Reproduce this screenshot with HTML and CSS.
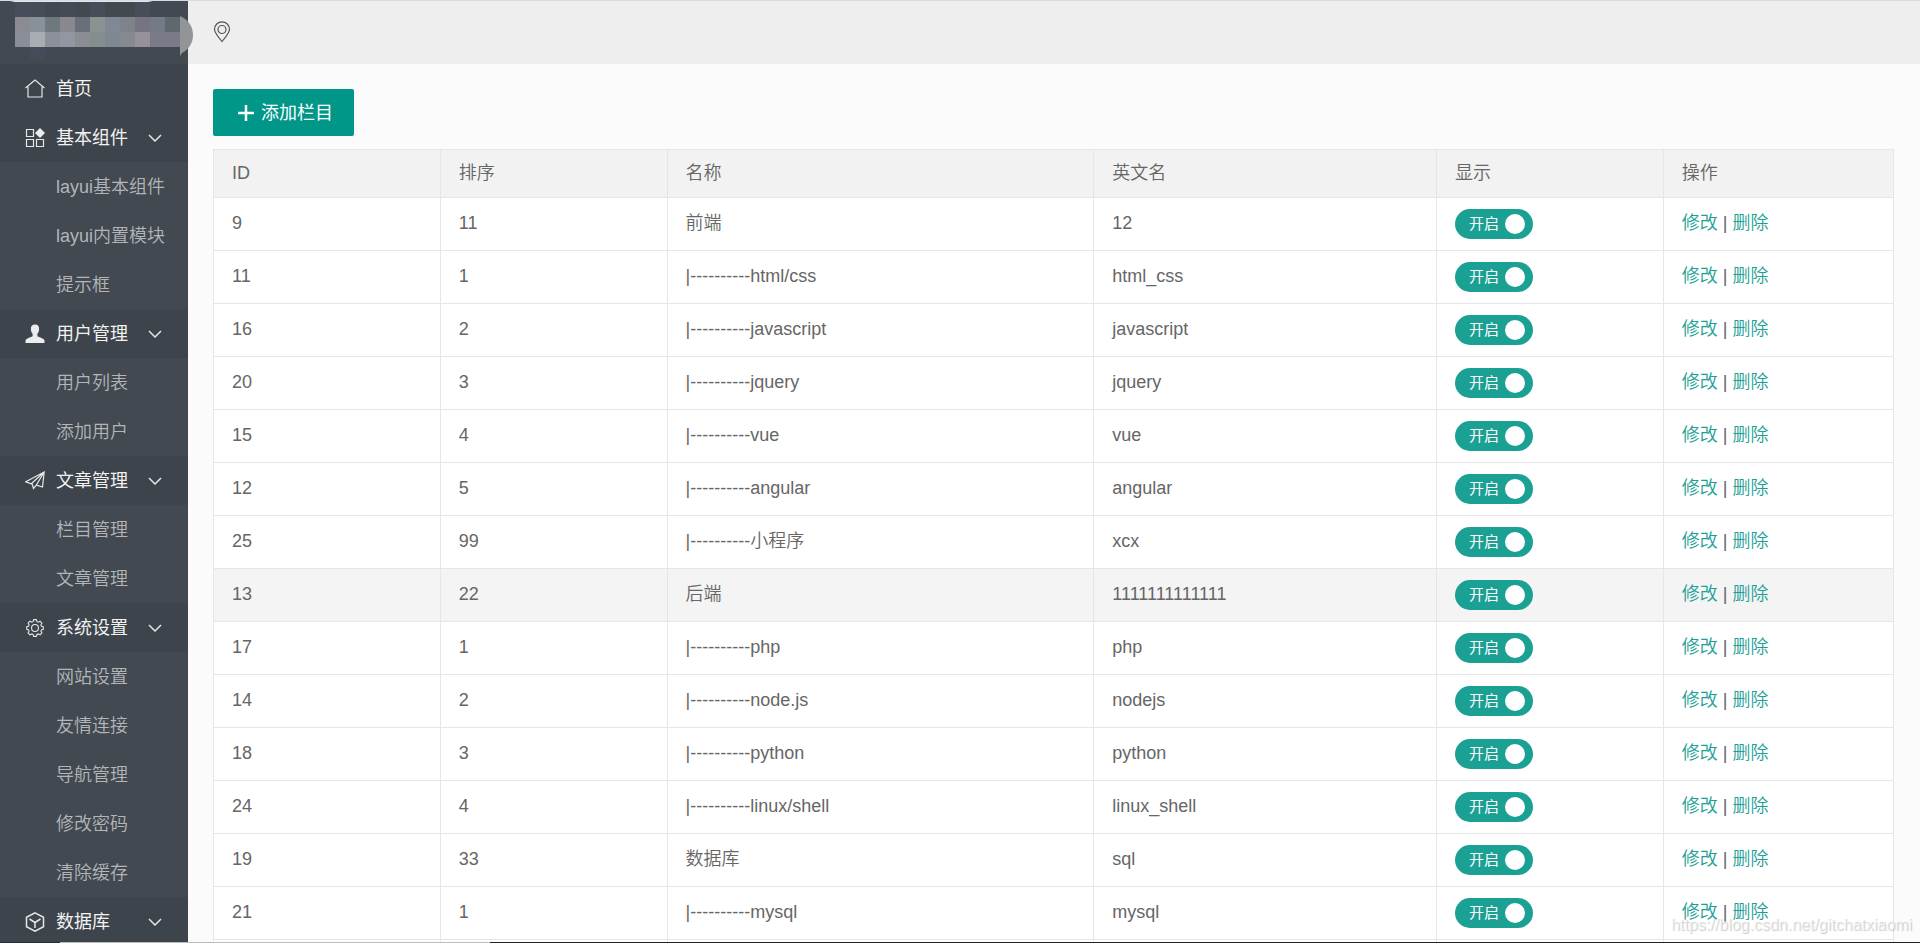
FILE: index.html
```html
<!DOCTYPE html>
<html lang="zh-CN">
<head>
<meta charset="utf-8">
<meta name="viewport" content="width=device-width, initial-scale=1">
<title>栏目管理</title>
<link rel="stylesheet" href="styles.css">
</head>
<body>
<div class="app">
  <aside class="sidebar">
    <div class="brand">
      <svg class="brand-logo" width="194" height="64" viewBox="0 0 194 64" shape-rendering="crispEdges" aria-hidden="true">
        <path fill="#e4e8ec" shape-rendering="auto" d="M5 0h153l-10 2H15z"/>
        <g fill="#484e59"><path d="M15 2h15v15H15z"/><path d="M30 2h15v15H30z" fill="#464d57"/><path d="M60 2h15v15H60z" fill="#454b54"/><path d="M90 2h15v15H90z"/><path d="M135 2h15v15h-15z"/><path d="M30 47h15v13H30z" fill="#454b58"/></g>
        <g><path fill="#8b8c92" d="M15 17h15v15H15z"/><path fill="#87919a" d="M30 17h15v15H30z"/><path fill="#6f777f" d="M45 17h15v15H45z"/><path fill="#88888e" d="M60 17h15v15H60z"/><path fill="#686e7a" d="M75 17h15v15H75z"/><path fill="#8a938f" d="M90 17h15v15H90z"/><path fill="#808795" d="M105 17h15v15h-15z"/><path fill="#7e828b" d="M120 17h15v15h-15z"/><path fill="#767482" d="M135 17h15v15h-15z"/><path fill="#737b86" d="M150 17h15v15h-15z"/><path fill="#5f686f" d="M165 17h15v15h-15z"/></g>
        <g><path fill="#8b8e98" d="M15 32h15v15H15z"/><path fill="#a9adb3" d="M30 32h15v15H30z"/><path fill="#8c9099" d="M45 32h15v15H45z"/><path fill="#9196a1" d="M60 32h15v15H60z"/><path fill="#8a8e94" d="M75 32h15v15H75z"/><path fill="#858e8e" d="M90 32h15v15H90z"/><path fill="#7d8891" d="M105 32h15v15h-15z"/><path fill="#868a90" d="M120 32h15v15h-15z"/><path fill="#98919a" d="M135 32h15v15h-15z"/><path fill="#7b7a88" d="M150 32h30v15h-30z"/></g>
        <path shape-rendering="auto" fill="#929497" d="M180 16C189 20 193 27 193 35C193 43 189 49 182 53L180 56z"/>
      </svg>
    </div>
    <nav class="menu">
      <a class="item" href="#"><svg class="icon" viewBox="0 0 20 20"><path d="M.5 9 10 1l9.500 8M3 7.500v10.500h14V7.500"/></svg><span>首页</span></a>

      <a class="item" href="#"><svg class="icon" viewBox="0 0 20 20"><path d="M1.500 1.500h7v7h-7zM1.500 11.500h7v7h-7zM11.500 11.500h7v7h-7z"/><path class="solid" d="M15 0l5 5-5 5-5-5z"/></svg><span>基本组件</span><svg class="arrow" viewBox="0 0 14 8"><path d="M1 1l6 6 6-6"/></svg></a>
      <div class="sub"><a href="#">layui基本组件</a><a href="#">layui内置模块</a><a href="#">提示框</a></div>

      <a class="item" href="#"><svg class="icon" viewBox="0 0 20 20"><path class="solid" d="M10 .5c3 0 4.300 2 4.100 4.800-.1 2-.8 3.500-1.700 4.500v2.400c1.900 1.300 5.600 1.900 6.700 3.300.4.800.4 1.800.4 3.500H.5c0-1.700 0-2.700.4-3.500 1.100-1.400 4.800-2 6.700-3.300V9.800c-.9-1-1.600-2.500-1.700-4.500C5.700 2.500 7 .5 10 .5z"/></svg><span>用户管理</span><svg class="arrow" viewBox="0 0 14 8"><path d="M1 1l6 6 6-6"/></svg></a>
      <div class="sub"><a href="#">用户列表</a><a href="#">添加用户</a></div>

      <a class="item" href="#"><svg class="icon" viewBox="0 0 20 20"><path d="M19.200 1 .8 10.800l5.400 2L19.200 1 17.500 16l-6.200-1.800L19.200 1M7 12.500 8.500 17.500l2.800-3.300"/></svg><span>文章管理</span><svg class="arrow" viewBox="0 0 14 8"><path d="M1 1l6 6 6-6"/></svg></a>
      <div class="sub"><a href="#">栏目管理</a><a href="#">文章管理</a></div>

      <a class="item" href="#"><svg class="icon gear" viewBox="-1 0 22 22"><path d="M8.500 1.800h3l.6 2.200 1.500.6 2-1.100 2 2.100-1.100 2 .6 1.400 2 .6v2.900l-2 .6-.6 1.400 1.100 2-2 2.100-2-1.100-1.500.6-.6 2.100h-3l-.6-2.100-1.500-.6-2 1.100-2-2.100 1.100-2-.6-1.400-2-.6V9.600l2-.6.600-1.400-1.100-2 2-2.100 2 1.100L7.900 4z"/><circle cx="10" cy="11" r="3.800"/></svg><span>系统设置</span><svg class="arrow" viewBox="0 0 14 8"><path d="M1 1l6 6 6-6"/></svg></a>
      <div class="sub"><a href="#">网站设置</a><a href="#">友情连接</a><a href="#">导航管理</a><a href="#">修改密码</a><a href="#">清除缓存</a></div>

      <a class="item" href="#"><svg class="icon cube" viewBox="0 0 20 20"><path d="M10 .8l8.500 4.500v9.400L10 19.200l-8.500-4.500V5.300zM4.500 7l5.500 3.500L15.500 7M10 10.500v5.500"/></svg><span>数据库</span><svg class="arrow" viewBox="0 0 14 8"><path d="M1 1l6 6 6-6"/></svg></a>
    </nav>
  </aside>
  <div class="page">
    <header class="topbar">
      <svg class="pin" viewBox="0 0 18 22" role="img" aria-label="位置"><path d="M9 20.500C5 15.500 1.500 12 1.500 8.300a7.500 7.500 0 0 1 15 0C16.500 12 13 15.500 9 20.500z"/><circle cx="9" cy="8.500" r="4"/></svg>
    </header>
    <main class="content">
      <button class="add" type="button"><svg class="plus" viewBox="0 0 18 18" aria-hidden="true"><path d="M9 1v16M1 9h16"/></svg>添加栏目</button>
      <table class="grid">
        <colgroup><col class="c-s"><col class="c-s"><col class="c-l"><col class="c-m"><col class="c-s"><col></colgroup>
        <thead><tr><th>ID</th><th>排序</th><th>名称</th><th>英文名</th><th>显示</th><th>操作</th></tr></thead>
        <tbody id="rows"></tbody>
      </table>
    </main>
  </div>
  <div class="watermark">https://blog.csdn.net/gitchatxiaomi</div>
  <div class="edge"></div>
</div>
<script src="app.js"></script>
</body>
</html>
```
FILE: styles.css
```css
* { box-sizing: border-box; }

body {
  margin: 0;
  color: #666;
  background: #fbfbfb;
  font: 350 18px/24px "Liberation Sans", "Noto Sans CJK SC", sans-serif;
}

a { text-decoration: none; }

svg { display: block; fill: none; }

.app {
  position: relative;
  display: flex;
  height: 100vh;
  overflow: hidden;
  border-top: 1px solid #d9dbdf;
}

.sidebar {
  flex: none;
  width: 188px;
  background: #424951;
}

.brand {
  position: relative;
  height: 63px;
}

.brand-logo {
  position: absolute;
  top: -1px;
  left: 0;
  z-index: 1;
}

.item {
  display: flex;
  align-items: center;
  height: 49px;
  padding: 0 26px 0 25px;
  color: #f2f2f2;
  background: #3d444c;
  font-weight: 400;
}

.icon {
  width: 20px;
  height: 20px;
  margin-right: 11px;
  stroke: #e6e6e6;
  stroke-width: 1.2;
}

.icon .solid { fill: #ececec; stroke: none; }

.cube { stroke-width: 1.5; }

.arrow {
  width: 14px;
  height: 8px;
  margin-left: auto;
  stroke: #e6e6e6;
  stroke-width: 1.5;
}

.sub a {
  display: flex;
  align-items: center;
  height: 49px;
  padding-left: 56px;
  color: #b3b5b8;
  white-space: nowrap;
}

.page {
  flex: 1;
  min-width: 0;
}

.topbar {
  display: flex;
  align-items: center;
  height: 63px;
  padding: 0 25px 2px;
  background: #eee;
}

.pin {
  width: 18px;
  height: 22px;
  stroke: #555;
  stroke-width: 1.2;
}

.content { padding: 25px 26px 0 25px; }

.add {
  display: flex;
  align-items: center;
  gap: 6px;
  height: 47px;
  margin-bottom: 13px;
  padding: 0 21px 0 24px;
  border: 0;
  border-radius: 2px;
  color: #fff;
  background: #009688;
  font: inherit;
  font-weight: 400;
}

.plus {
  width: 18px;
  height: 18px;
  stroke: #fff;
  stroke-width: 2.5;
}

.grid {
  width: 100%;
  table-layout: fixed;
  border-collapse: collapse;
  background: #fff;
}

.c-s { width: 13.5%; }
.c-m { width: 20.4%; }
.c-l { width: 25.4%; }

.grid th,
.grid td {
  height: 53px;
  padding: 0 18px 2px;
  border: 1px solid #e6e6e6;
  text-align: left;
  font-weight: 350;
}

.grid th {
  height: 48px;
  background: #f2f2f2;
}

.grid .toggle { padding-bottom: 0; }

.hover { background: #f4f4f4; }

.grid a { color: #1ba094; }

.switch {
  position: relative;
  display: flex;
  align-items: center;
  width: 78px;
  height: 30px;
  padding-left: 14px;
  border-radius: 15px;
  color: #fff;
  background: #1ba094;
  font-size: 15px;
  font-weight: 400;
}

.switch input {
  position: absolute;
  right: 8px;
  width: 20px;
  height: 20px;
  margin: 0;
  border-radius: 50%;
  background: #fff;
  appearance: none;
}

.watermark {
  position: absolute;
  right: 8px;
  bottom: 6px;
  color: rgba(255, 255, 255, 0.5);
  font-size: 16px;
  text-shadow: 1px 1px 1px rgba(120, 120, 120, 0.4);
}

.edge {
  position: absolute;
  right: 0;
  bottom: 0;
  left: 0;
  height: 1px;
  background: linear-gradient(90deg, #1f3038 60px, #bbb 60px, #bbb 490px, #1c2226 490px);
}
```
FILE: app.js
```js
const dash = '|----------';
const rows = [
  [9, 11, '前端', '12'],
  [11, 1, dash + 'html/css', 'html_css'],
  [16, 2, dash + 'javascript', 'javascript'],
  [20, 3, dash + 'jquery', 'jquery'],
  [15, 4, dash + 'vue', 'vue'],
  [12, 5, dash + 'angular', 'angular'],
  [25, 99, dash + '小程序', 'xcx'],
  [13, 22, '后端', '1111111111111'],
  [17, 1, dash + 'php', 'php'],
  [14, 2, dash + 'node.js', 'nodejs'],
  [18, 3, dash + 'python', 'python'],
  [24, 4, dash + 'linux/shell', 'linux_shell'],
  [19, 33, '数据库', 'sql'],
  [21, 1, dash + 'mysql', 'mysql']
];

document.getElementById('rows').innerHTML = rows.map(([id, sort, name, en]) => `
  <tr${id === 13 ? ' class="hover"' : ''}>
    <td>${id}</td><td>${sort}</td><td>${name}</td><td>${en}</td>
    <td class="toggle"><label class="switch">开启<input type="checkbox" checked></label></td>
    <td><a href="#">修改</a> | <a href="#">删除</a></td>
  </tr>`).join('') + '<tr><td></td><td></td><td></td><td></td><td></td><td></td></tr>';
```
